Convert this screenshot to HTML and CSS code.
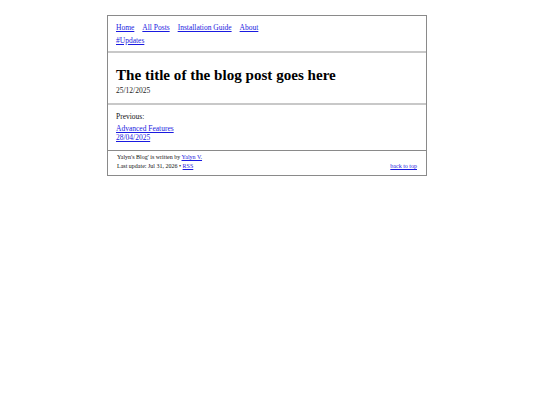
FILE: index.html
```html
<!DOCTYPE html>
<html>
<head>
<meta charset="utf-8">
<link rel="stylesheet" href="styles.css">
</head>
<body>
<div class="page">
  <header class="site-header">
    <nav class="nav">
      <a href="#">Home</a>
      <a href="#">All Posts</a>
      <a href="#">Installation Guide</a>
      <a href="#">About</a>
    </nav>
    <div class="tags"><a href="#">#Updates</a></div>
  </header>
  <section class="post">
    <h1 class="post-title">The title of the blog post goes here</h1>
    <div class="post-date">25/12/2025</div>
  </section>
  <section class="prev">
    <div class="prev-label">Previous:</div>
    <a class="prev-link" href="#">Advanced Features<br>28/04/2025</a>
  </section>
  <footer class="site-footer">
    <div class="footer-left">
      <div>Yalyn's Blog' is written by <a href="#">Yalyn V.</a></div>
      <div>Last update: Jul 31, 2026 &bull; <a href="#">RSS</a></div>
    </div>
    <a class="top-link" href="#">back to top</a>
  </footer>
</div>
</body>
</html>
```

FILE: styles.css
```css
html, body {
  margin: 0;
  padding: 0;
  background: #fff;
}
body {
  font-family: "Liberation Serif", "Times New Roman", serif;
  font-size: 7.5px;
  color: #111;
}
a {
  color: #1a1ae0;
}
.page {
  box-sizing: border-box;
  width: 320px;
  margin: 15px 0 0 107px;
  border: 1px solid #8a8a8a;
}
.site-header {
  padding: 5px 8px 4px;
  border-bottom: 2px solid #c8c8c8;
  line-height: 13px;
}
.nav {
  display: flex;
  gap: 8px;
}
.post {
  padding: 14px 8px 8px;
  border-bottom: 2px solid #c8c8c8;
}
.post-title {
  margin: 0;
  font-size: 15.1px;
  line-height: 17px;
  font-weight: bold;
  color: #000;
}
.post-date {
  margin-top: 2px;
  line-height: 9px;
  color: #222;
}
.prev {
  padding: 7px 8px 8px;
  border-bottom: 1px solid #8a8a8a;
  line-height: 9px;
}
.prev-label {
  margin-bottom: 3px;
}
.prev-link {
  display: block;
}
.site-footer {
  display: flex;
  justify-content: space-between;
  align-items: flex-end;
  padding: 2px 9px 4px 9px;
  font-size: 6px;
  line-height: 9px;
}
```
